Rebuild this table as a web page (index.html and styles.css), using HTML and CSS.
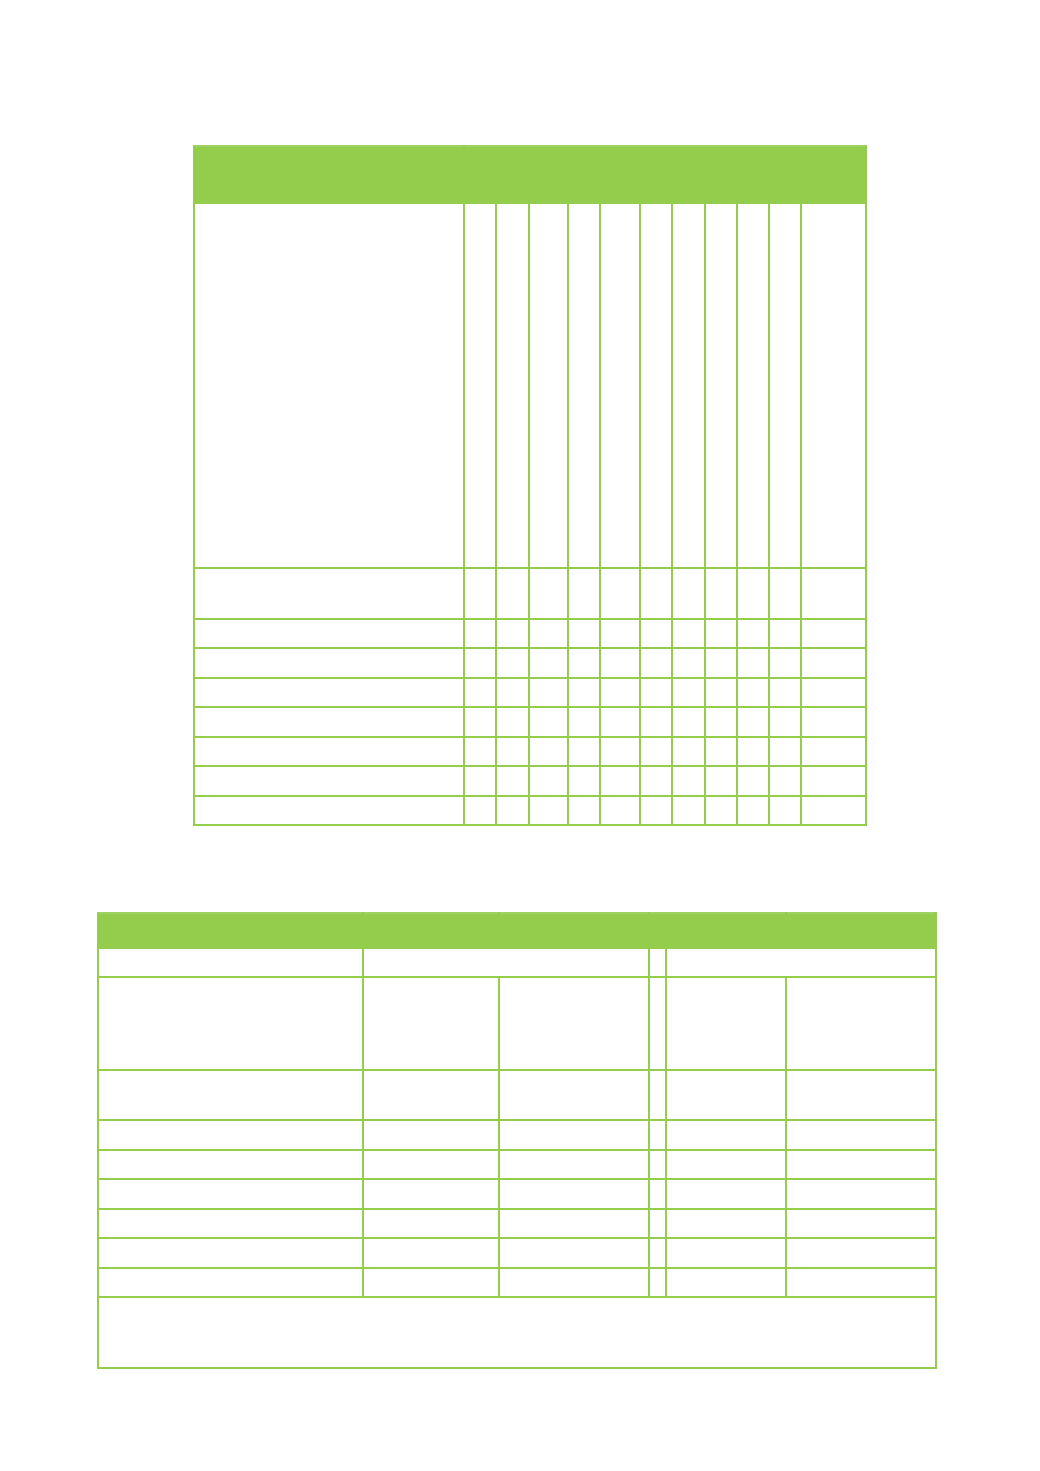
FILE: index.html
```html
<!DOCTYPE html>
<html lang="en">
<head>
<meta charset="utf-8">
<title>Tables</title>
<link rel="stylesheet" href="styles.css">
</head>
<body>
<main class="page">
  <table class="grid grid-one">
    <colgroup>
      <col class="c270"><col class="c32"><col class="c33"><col class="c39"><col class="c32"><col class="c40"><col class="c32"><col class="c33"><col class="c32"><col class="c32"><col class="c32"><col class="c65">
    </colgroup>
    <thead>
      <tr class="h57"><th class="head"></th><th class="head" colspan="11"></th></tr>
    </thead>
    <tbody>
      <tr class="h365"><td></td><td></td><td></td><td></td><td></td><td></td><td></td><td></td><td></td><td></td><td></td><td></td></tr>
      <tr class="h51"><td></td><td></td><td></td><td></td><td></td><td></td><td></td><td></td><td></td><td></td><td></td><td></td></tr>
      <tr class="h29"><td></td><td></td><td></td><td></td><td></td><td></td><td></td><td></td><td></td><td></td><td></td><td></td></tr>
      <tr class="h30"><td></td><td></td><td></td><td></td><td></td><td></td><td></td><td></td><td></td><td></td><td></td><td></td></tr>
      <tr class="h29"><td></td><td></td><td></td><td></td><td></td><td></td><td></td><td></td><td></td><td></td><td></td><td></td></tr>
      <tr class="h30"><td></td><td></td><td></td><td></td><td></td><td></td><td></td><td></td><td></td><td></td><td></td><td></td></tr>
      <tr class="h29"><td></td><td></td><td></td><td></td><td></td><td></td><td></td><td></td><td></td><td></td><td></td><td></td></tr>
      <tr class="h30"><td></td><td></td><td></td><td></td><td></td><td></td><td></td><td></td><td></td><td></td><td></td><td></td></tr>
      <tr class="h29"><td></td><td></td><td></td><td></td><td></td><td></td><td></td><td></td><td></td><td></td><td></td><td></td></tr>
    </tbody>
  </table>

  <table class="grid grid-two">
    <colgroup>
      <col class="c265"><col class="c136"><col class="c150"><col class="c17"><col class="c120"><col class="c150">
    </colgroup>
    <thead>
      <tr class="h35"><th class="head"></th><th class="head"></th><th class="head"></th><th class="head" colspan="2"></th><th class="head"></th></tr>
    </thead>
    <tbody>
      <tr class="h29"><td></td><td colspan="2"></td><td></td><td colspan="2"></td></tr>
      <tr class="h93"><td></td><td></td><td></td><td></td><td></td><td></td></tr>
      <tr class="h50"><td></td><td></td><td></td><td></td><td></td><td></td></tr>
      <tr class="h30"><td></td><td></td><td></td><td></td><td></td><td></td></tr>
      <tr class="h29"><td></td><td></td><td></td><td></td><td></td><td></td></tr>
      <tr class="h30"><td></td><td></td><td></td><td></td><td></td><td></td></tr>
      <tr class="h29"><td></td><td></td><td></td><td></td><td></td><td></td></tr>
      <tr class="h30"><td></td><td></td><td></td><td></td><td></td><td></td></tr>
      <tr class="h29"><td></td><td></td><td></td><td></td><td></td><td></td></tr>
      <tr class="h71"><td colspan="6"></td></tr>
    </tbody>
  </table>
</main>
</body>
</html>
```

FILE: styles.css
```css
html, body {
  margin: 0;
  padding: 0;
  background: #ffffff;
  font-family: "Liberation Sans", Arial, sans-serif;
}

.page {
  width: 1040px;
  min-height: 1471px;
  padding-top: 145px;
  box-sizing: border-box;
}

.grid {
  border-collapse: collapse;
  table-layout: fixed;
  border: 2px solid #94cd4c;
}

.grid td,
.grid th {
  border: 2px solid #94cd4c;
  padding: 0;
}

.grid .head {
  background: #94cd4c;
  border-top-color: #9ed262;
  border-left-color: #94cd4c;
  border-right-color: #94cd4c;
}

.grid-one {
  width: 674px;
  margin-left: 193px;
}

.grid-two {
  width: 840px;
  margin-left: 97px;
  margin-top: 86px;
}

.c270 { width: 270px; }
.c32 { width: 32px; }
.c33 { width: 33px; }
.c39 { width: 39px; }
.c40 { width: 40px; }
.c65 { width: 65px; }

.c265 { width: 265px; }
.c136 { width: 136px; }
.c150 { width: 150px; }
.c17 { width: 17px; }
.c120 { width: 120px; }

.h57 { height: 57px; }
.h365 { height: 365px; }
.h51 { height: 51px; }
.h29 { height: 29px; }
.h30 { height: 30px; }
.h35 { height: 35px; }
.h93 { height: 93px; }
.h50 { height: 50px; }
.h71 { height: 71px; }
```
